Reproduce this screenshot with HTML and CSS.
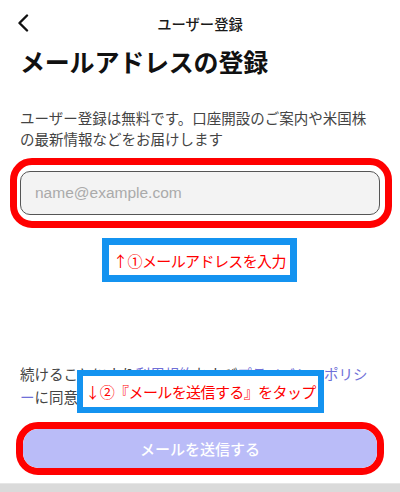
FILE: index.html
```html
<!DOCTYPE html>
<html lang="ja">
<head>
<meta charset="utf-8">
<link rel="stylesheet" href="styles.css">
</head>
<body>
<div class="page">
  <header class="topbar">
    <span class="back"><svg width="12" height="18" viewBox="0 0 12 18"><path d="M10 1.5 L2.5 9 L10 16.5" fill="none" stroke="#111" stroke-width="2.4" stroke-linecap="round" stroke-linejoin="round"/></svg></span>
    <span class="title">ユーザー登録</span>
  </header>
  <h1 class="heading">メールアドレスの登録</h1>
  <p class="lead">ユーザー登録は無料です。口座開設のご案内や米国株の最新情報などをお届けします</p>
  <div class="ring ring-input">
    <input class="email" type="email" placeholder="name@example.com">
  </div>
  <div class="note note-one">↑①メールアドレスを入力</div>
  <div class="spacer"></div>
  <p class="terms">続けることにより<span class="link">利用規約</span>および<span class="link">プライバシーポリシー</span>に同意したものとみなされます</p>
  <div class="ring ring-button">
    <button class="submit" type="button">メールを送信する</button>
  </div>
  <div class="bottombar"></div>
  <div class="note note-two">↓②『メールを送信する』をタップ</div>
</div>
</body>
</html>
```
FILE: styles.css
```css
* { box-sizing: border-box; }
html, body { margin: 0; padding: 0; background: #fff; }
body {
  font-family: "Noto Sans CJK JP", "Noto Sans", sans-serif;
  color: #333;
}
.page {
  position: relative;
  width: 400px;
  height: 492px;
  display: flex;
  flex-direction: column;
  overflow: hidden;
}
.topbar {
  position: relative;
  height: 44px;
  display: flex;
  align-items: center;
  justify-content: center;
}
.back {
  position: absolute;
  left: 17px;
  top: 14px;
  display: flex;
}
.title {
  font-size: 14.3px;
  font-weight: 500;
  color: #1a1a1a;
  margin-top: 2px;
}
.heading {
  margin: 0 0 0 20px;
  font-size: 25px;
  line-height: 34px;
  font-weight: 700;
  color: #111;
  letter-spacing: -0.2px;
}
.lead {
  margin: 29px 20px 0;
  width: 360px;
  font-size: 14.5px;
  line-height: 21px;
  color: #444;
}
.ring {
  border: 7px solid #ff0000;
}
.ring-input {
  margin: 9px 8px 0 10px;
  height: 70px;
  border-radius: 22px;
  padding: 6px 5px 6px 3px;
}
.email {
  display: block;
  width: 100%;
  height: 44px;
  border: 1.5px solid #555;
  border-radius: 10px;
  background: #f3f3f3;
  padding: 0 14px;
  font-family: "Liberation Sans", Arial, sans-serif;
  font-size: 15.5px;
  color: #333;
  outline: none;
}
.email::placeholder { color: #aaa; }
.note {
  border: 7px solid #1493f0;
  background: #fff;
  color: #ff0000;
  display: flex;
  align-items: center;
  justify-content: center;
  white-space: nowrap;
}
.note-one {
  margin: 10px 0 0 102px;
  width: 195px;
  height: 44px;
  font-size: 15px;
  letter-spacing: -0.6px;
}
.note-two {
  position: absolute;
  left: 77px;
  top: 370px;
  width: 247px;
  height: 43px;
  border-width: 6px;
  font-size: 15px;
  letter-spacing: -0.6px;
}
.spacer { flex: 1; }
.terms {
  margin: 0 20px;
  width: 360px;
  font-size: 14.5px;
  line-height: 23px;
  color: #444;
}
.link { color: #6f6fd8; }
.ring-button {
  margin: 14px 16px 0 16px;
  height: 53px;
  border-radius: 22px;
  overflow: hidden;
}
.submit {
  display: block;
  width: 100%;
  height: 100%;
  border: 0;
  border-radius: 15px;
  background: #babcf8;
  color: #fff;
  font-family: "Noto Sans CJK JP", sans-serif;
  font-size: 15px;
  font-weight: 500;
}
.bottombar {
  margin-top: 8px;
  height: 9px;
  background: #dadada;
  border-top: 1px solid #e6e6e6;
}
```
